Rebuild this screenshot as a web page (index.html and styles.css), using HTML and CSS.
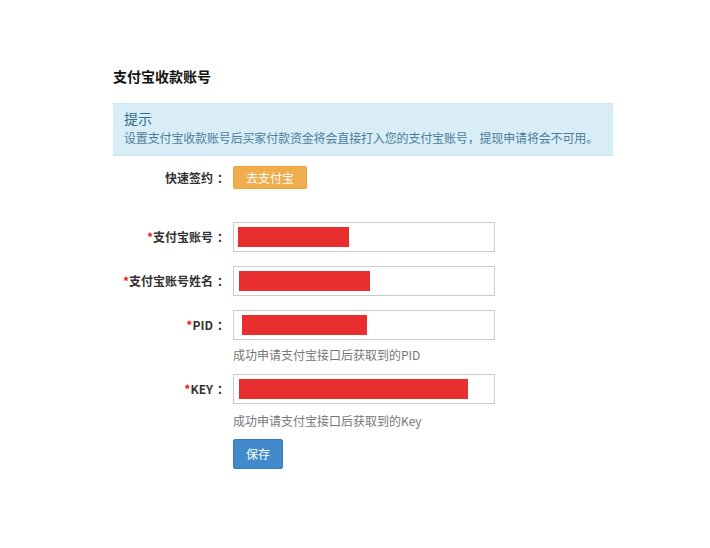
FILE: index.html
```html
<!DOCTYPE html>
<html lang="zh-CN">
<head>
<meta charset="utf-8">
<title>支付宝收款账号</title>
<link rel="stylesheet" href="styles.css">
</head>
<body>
<div class="page">
  <h3 class="title">支付宝收款账号</h3>
  <div class="alert">
    <div class="alert-head">提示</div>
    <div class="alert-body">设置支付宝收款账号后买家付款资金将会直接打入您的支付宝账号，提现申请将会不可用。</div>
  </div>

  <div class="row row-quick">
    <div class="label">快速签约<span class="colon">：</span></div>
    <div class="control"><span class="btn btn-warning">去支付宝</span></div>
  </div>

  <div class="row row-first">
    <div class="label"><span class="req">*</span>支付宝账号<span class="colon">：</span></div>
    <div class="control">
      <div class="input"><span class="mask" style="margin-left:4px;width:111px"></span></div>
    </div>
  </div>

  <div class="row">
    <div class="label"><span class="req">*</span>支付宝账号姓名<span class="colon">：</span></div>
    <div class="control">
      <div class="input"><span class="mask" style="margin-left:5px;width:131px"></span></div>
    </div>
  </div>

  <div class="row">
    <div class="label"><span class="req">*</span>PID<span class="colon">：</span></div>
    <div class="control">
      <div class="input"><span class="mask" style="margin-left:8px;width:125px"></span></div>
      <div class="help">成功申请支付宝接口后获取到的PID</div>
    </div>
  </div>

  <div class="row row-key">
    <div class="label"><span class="req">*</span>KEY<span class="colon">：</span></div>
    <div class="control">
      <div class="input"><span class="mask" style="margin-left:5px;width:229px"></span></div>
      <div class="help">成功申请支付宝接口后获取到的Key</div>
      <span class="btn btn-primary">保存</span>
    </div>
  </div>
</div>
</body>
</html>
```

FILE: styles.css
```css
* { box-sizing: border-box; }
body {
  margin: 0;
  background: #fff;
  font-family: "Noto Sans CJK SC", "Liberation Sans", sans-serif;
  font-size: 12px;
  color: #333;
}
.page {
  width: 613px;
  padding: 68px 0 0 113px;
}
.title {
  margin: 0;
  font-size: 14px;
  line-height: 16px;
  font-weight: bold;
  color: #111;
}
.alert {
  margin-top: 19px;
  width: 500px;
  background: #d9edf7;
  border-top: 1px solid #c6e6f2;
  border-bottom: 1px solid #c6e6f2;
  padding: 4px 8px 7px 11px;
  color: #31708f;
}
.alert-head {
  font-size: 14px;
  line-height: 20px;
}
.alert-body {
  font-size: 12px;
  line-height: 20px;
  color: #4a7e98;
  white-space: nowrap;
  letter-spacing: -0.15px;
}
.row {
  display: flex;
  align-items: flex-start;
  margin-top: 14px;
}
.row-quick { margin-top: 10px; }
.row-first { margin-top: 33px; }
.row-key { margin-top: 9px; }
.label {
  width: 120px;
  flex: none;
  text-align: right;
  padding-right: 4px;
  font-weight: bold;
  line-height: 30px;
  color: #333;
}
.colon { margin-left: 4px; }
.row-quick .label { line-height: 23px; }
.req { color: #e4202a; }
.control {
  display: flex;
  flex-direction: column;
  align-items: flex-start;
}
.input {
  width: 262px;
  height: 30px;
  border: 1px solid #ccc;
  display: flex;
  align-items: center;
}
.mask {
  display: block;
  height: 20px;
  background: #e82e2e;
}
.help {
  margin-top: 5px;
  line-height: 20px;
  color: #777;
}
.row-key .help { margin-top: 7px; }
.btn {
  display: inline-block;
  color: #fff;
  border-radius: 2px;
  text-align: center;
}
.btn-warning {
  width: 74px;
  height: 23px;
  background: #f0ad4e;
  border: 1px solid #eea236;
  line-height: 21px;
}
.btn-primary {
  margin-top: 8px;
  width: 50px;
  height: 30px;
  line-height: 28px;
  background: #428bca;
  border: 1px solid #357ebd;
}
```
